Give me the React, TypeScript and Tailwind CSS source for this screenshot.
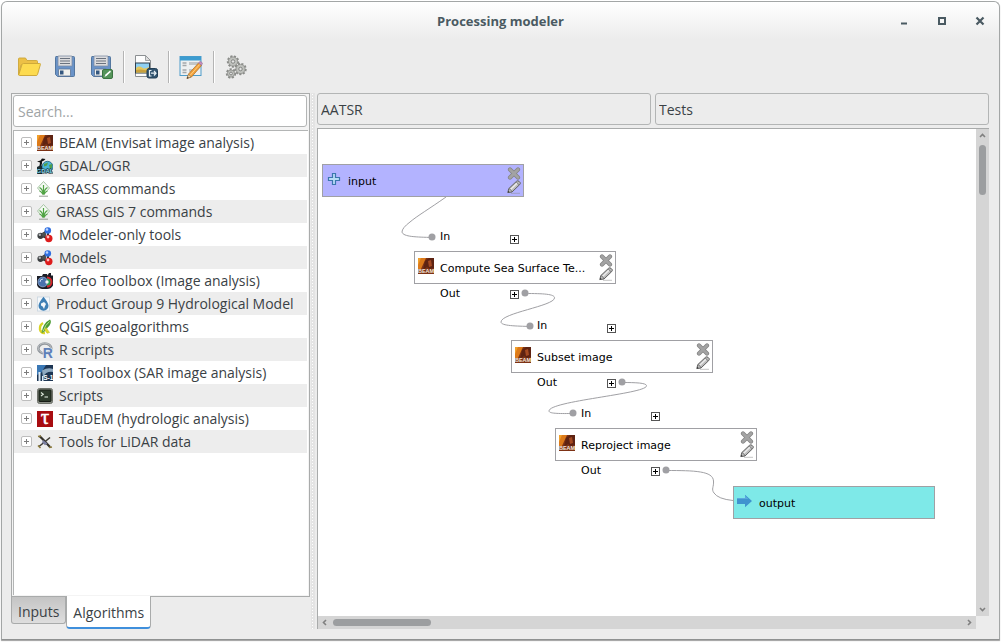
import React from 'react';

/* ---------- toolbar icons ---------- */

function FolderIcon() {
  return (
    <svg width="24" height="24" viewBox="0 0 24 24" aria-hidden="true">
      <path d="M1.500 20V4q0-1 1-1h6l1.500 2.500h9.500q1 0 1 1V10H4z" fill="#ecc046" stroke="#cda638" strokeWidth=".9" />
      <path d="M6.500 8.500h16.200q1 0 .7 1L20.500 19.500q-.3 1-1.300 1H2.500q-1 0-.7-1L5 9.500q.3-1 1.500-1z" fill="#fddb50" stroke="#cfa93a" strokeWidth="1" />
    </svg>
  );
}

function Floppy({ badge = false }: { badge?: boolean }) {
  return (
    <svg width="24" height="24" viewBox="0 0 24 24" aria-hidden="true">
      <path d="M3 1.500h17.500q1 0 1 1v18q0 1-1 1H4.500l-2-2v-17q0-1 .5-1z" fill="#6a93c8" stroke="#54779f" />
      <rect x="5" y="1" width="14" height="10" rx=".5" fill="#dcdcde" stroke="#7f8ea4" strokeWidth=".8" />
      <path d="M7 3.500h10M7 6h10M7 8.500h10" stroke="#6a727e" strokeWidth="1" />
      <rect x="5.500" y="14" width="12" height="7" rx=".5" fill="#f0f0ec" stroke="#5d7594" strokeWidth=".8" />
      <rect x="7" y="15.500" width="3.500" height="4" fill="#34577f" />
      {badge && (
        <g>
          <rect x="13.500" y="14.500" width="10" height="9" rx="1.500" fill="#55945a" stroke="#3c7442" />
          <path d="M15.500 22l1-2.500 4.500-4 1 1.200-4.300 4z" fill="#fff" />
        </g>
      )}
    </svg>
  );
}

function ExportImageIcon() {
  return (
    <svg width="24" height="24" viewBox="0 0 24 24" aria-hidden="true">
      <path d="M1.500.500h10l5 5v16h-15z" fill="#fdfdfd" stroke="#8b8f92" />
      <path d="M11.500.500v5h5z" fill="#ddd" stroke="#8b8f92" strokeWidth=".8" />
      <rect x="1.500" y="8" width="14" height="10" fill="#8fd0f2" stroke="#2f3f4c" />
      <path d="M2 13q3-2.500 6-.5t7-.5v5.500H2z" fill="#e3c75d" />
      <path d="M2 15q5-1.500 13 1v1.500H2z" fill="#c9a03d" />
      <rect x="13" y="13.500" width="10.500" height="9.500" rx="2" fill="#31536f" stroke="#223e55" />
      <path d="M17.500 15.500h-2v5.500h2M17 18.200h5M20 16l2 2.200-2 2.300" fill="none" stroke="#e9f1f6" strokeWidth="1.200" />
    </svg>
  );
}

function EditFormIcon() {
  return (
    <svg width="24" height="24" viewBox="0 0 24 24" aria-hidden="true">
      <rect x="1" y="1.500" width="21" height="19" fill="#eef0f1" stroke="#4e9cc9" />
      <rect x="1" y="1.500" width="21" height="4" fill="#3c9cd0" />
      <path d="M3.500 8h4M3.500 10.500h4M3.500 15h4M3.500 17.500h4" stroke="#a4a7aa" strokeWidth="1.500" />
      <path d="M10 8.500h9M10 15.500h5" stroke="#c3c6c8" strokeWidth="3" />
      <path d="M8 23.500l1.500-4.500L19.500 8l3 2.500L12.500 22z" fill="#f2a03a" stroke="#a86a20" strokeWidth=".7" />
      <path d="M11 20.500L20.800 9.300" stroke="#ffd083" strokeWidth="1" />
      <path d="M19.500 8l1-1.200q1.500-.8 3 1.300L22.500 10.500z" fill="#c58fc0" stroke="#8a6486" strokeWidth=".5" />
      <path d="M8 23.500l1.500-4 2.600 2.300z" fill="#f4dcb4" stroke="#87653a" strokeWidth=".5" />
      <path d="M7.800 23.700l.8-2 1.200 1.100z" fill="#333" />
    </svg>
  );
}

function Gear({ x, y, r }: { x: number; y: number; r: number }) {
  return (
    <g transform={`translate(${x} ${y})`}>
      <circle r={r} fill="none" stroke="#8a8c89" strokeWidth="2.400" strokeDasharray="2 1.400" />
      <circle r={r - 0.4} fill="#bfc1bd" stroke="#8a8c88" strokeWidth=".8" />
      <circle r={r * 0.35} fill="#e4e4e4" stroke="#7d7f7c" strokeWidth=".9" />
    </g>
  );
}

function GearsIcon() {
  return (
    <svg width="24" height="24" viewBox="0 0 24 24" aria-hidden="true">
      <Gear x={9} y={6.500} r={5} />
      <Gear x={16.500} y={14} r={5} />
      <Gear x={7} y={18.500} r={4} />
    </svg>
  );
}

/* ---------- provider icons ---------- */

function BeamIcon() {
  return (
    <svg width="16" height="16" viewBox="0 0 16 16" aria-hidden="true">
      <rect width="16" height="16" fill="#7d3215" />
      <path d="M0 0h8L3 11H0z" fill="#dc7a1a" />
      <path d="M0 0h3L0 7z" fill="#f0a02c" />
      <path d="M7 3l4-3h5v10l-4 1-3-2-4 3z" fill="#5e2312" />
      <path d="M10 3l3-1 1 6-3 1z" fill="#a54a22" />
      <text x="8" y="15.300" textAnchor="middle" fontSize="5.500" fontWeight="700" fontFamily="Liberation Sans, sans-serif" fill="#f2e6df">BEAM</text>
    </svg>
  );
}

function GdalIcon() {
  return (
    <svg width="16" height="16" viewBox="0 0 16 16" aria-hidden="true">
      <circle cx="10.500" cy="8.800" r="5.500" fill="#49b5d6" stroke="#1c5b73" strokeWidth=".8" />
      <path d="M7 6l4-1.500-1 3-3 1zM12 7l3-1v4l-2 1z" fill="#4f9e4c" />
      <path d="M0 3.500l3.500-1L5 .5 8.500 1 7 2.500 5 3.500v2l-1 3-1.500-.5L3 4.500z" fill="#111" />
      <path d="M0 9l3-1.500h2V16H1q-1 0-1-1z" fill="#1b2b30" />
      <text x="8" y="14.800" textAnchor="middle" fontSize="6" fontWeight="700" fontFamily="Liberation Sans, sans-serif" fill="#8fdcec" stroke="#10262d" strokeWidth="1.200" paintOrder="stroke">GDAL</text>
    </svg>
  );
}

function GrassIcon() {
  return (
    <svg width="13" height="16" viewBox="0 0 13 16" aria-hidden="true">
      <path d="M6.500.500l6 6.500-6 7-6-7z" fill="#f4faf3" stroke="#9fbd9d" strokeWidth=".9" />
      <path d="M6.500 13.500V4M6.300 13Q5.500 8 2.500 6.500M6.700 13Q7.500 8 10.500 6.500M6.200 13.500Q4.500 10.500 2.500 10M6.800 13.500q1.500-3 3.700-3.500" fill="none" stroke="#4fa343" strokeWidth="1.200" />
      <path d="M2 15.200h9" stroke="#8b928a" strokeWidth=".9" />
    </svg>
  );
}

function ModelIcon() {
  return (
    <svg width="16" height="16" viewBox="0 0 16 16" aria-hidden="true">
      <path d="M4 8.500L10 3.500M4 8.500l7 3M11 4v7" stroke="#333" strokeWidth="2" />
      <circle cx="3.500" cy="8.800" r="3.100" fill="#3b3e40" />
      <circle cx="7" cy="7.500" r="2.300" fill="#4d5052" />
      <circle cx="10.800" cy="3.500" r="3.300" fill="#2f6fe0" />
      <circle cx="11.800" cy="11.500" r="3.700" fill="#dd1c1c" />
      <circle cx="2.800" cy="7.800" r="1.200" fill="#b6b9bb" />
      <circle cx="10" cy="2.500" r="1.300" fill="#bcd4ff" />
      <circle cx="11" cy="10" r="1.400" fill="#ffc1c1" />
    </svg>
  );
}

function OrfeoIcon() {
  return (
    <svg width="16" height="16" viewBox="0 0 16 16" aria-hidden="true">
      <path d="M0 3h5l1-2h4l.5 1.500L12 0h2v2.500h2v10q-2 3.500-6 3.500H5q-4-.5-5-4z" fill="#1b1d26" />
      <circle cx="5.800" cy="9" r="4.900" fill="#4a72ad" stroke="#9fb6d8" strokeWidth=".7" />
      <path d="M10 3.500a5.500 5.500 0 010 11z" fill="#d6232b" />
      <path d="M10 5.500a3.500 3.500 0 010 7z" fill="#2b9a51" />
      <circle cx="10" cy="9" r="1.700" fill="#f3f3f3" />
      <path d="M3 9a3 3 0 013-3" fill="none" stroke="#cfdcf0" />
    </svg>
  );
}

function DropIcon() {
  return (
    <svg width="13" height="16" viewBox="0 0 13 16" aria-hidden="true">
      <rect x=".5" y="1" width="12" height="14" fill="#f5f8fb" stroke="#c9d5e0" strokeWidth=".8" />
      <path d="M6.500.800Q11.500 7 11.500 9.800a5 5 0 01-10 0Q1.500 7 6.500.800z" fill="#3d7fb5" />
      <path d="M4 7.500l3-1.500 2 2-1 2-1 3-1.300-2.500L4 9.500z" fill="#f2f7fb" />
    </svg>
  );
}

function QgisIcon() {
  return (
    <svg width="16" height="16" viewBox="0 0 16 16" aria-hidden="true">
      <path d="M6 4Q2.500 6 3 10.500 4 14.500 8 14" fill="none" stroke="#d9d325" strokeWidth="2.400" />
      <path d="M4.500 14Q6 4 13 .500q2 2-.5 6L7 13z" fill="#4a9a33" />
      <path d="M6 12.500Q8 6 12.500 2.500" fill="none" stroke="#b4df94" strokeWidth="1" />
      <path d="M9 8.500l3.500 5-2.500.800-2.500-3.500z" fill="#dfdb28" stroke="#bcb52a" strokeWidth=".5" />
    </svg>
  );
}

function RIcon() {
  return (
    <svg className="overflow-visible" width="16" height="16" viewBox="0 0 16 16" aria-hidden="true">
      <ellipse cx="7.800" cy="6.500" rx="6.500" ry="5" fill="none" stroke="#8f949a" strokeWidth="2.600" />
      <ellipse cx="7.600" cy="6" rx="6.500" ry="4.900" fill="none" stroke="#c7cacd" strokeWidth=".8" />
      <text x="5.800" y="15.500" fontSize="14" fontWeight="700" fontFamily="Liberation Sans, sans-serif" fill="#5e7fb8" stroke="#e8edf5" strokeWidth="1.200" paintOrder="stroke">R</text>
    </svg>
  );
}

function S1Icon() {
  return (
    <svg width="16" height="16" viewBox="0 0 16 16" aria-hidden="true">
      <rect width="16" height="16" fill="#1d3553" />
      <path d="M0 0h9L4 8l-4 2z" fill="#3a78b5" />
      <path d="M5 5.500Q11 2 16 4v3Q9 6 6 12z" fill="#8fa9c0" />
      <path d="M1.500 16V7h2v9zM5 11h1.500v5H5z" fill="#dbe7f2" />
      <text x="11.300" y="15.200" textAnchor="middle" fontSize="6.500" fontWeight="700" fontFamily="Liberation Sans, sans-serif" fill="#fff">S-1</text>
    </svg>
  );
}

function TerminalIcon() {
  return (
    <svg width="16" height="16" viewBox="0 0 16 16" aria-hidden="true">
      <rect x=".5" y=".5" width="15" height="15" rx="2" fill="#8b8f86" stroke="#6d7069" />
      <rect x="2" y="2" width="12" height="11.500" rx=".5" fill="#2e3b2c" stroke="#161c15" />
      <path d="M4 4.500l2.300 1.800L4 8" fill="none" stroke="#dfe9dc" strokeWidth="1.100" />
      <path d="M7.500 9h3.500" stroke="#dfe9dc" strokeWidth="1.100" />
    </svg>
  );
}

function TauIcon() {
  return (
    <svg className="overflow-visible" width="16" height="16" viewBox="0 0 16 16" aria-hidden="true">
      <rect width="16" height="16" fill="#a80c10" />
      <text x="8" y="13" textAnchor="middle" fontSize="21" fontFamily="Liberation Serif, serif" fill="#fff" stroke="#fff" strokeWidth=".5">τ</text>
    </svg>
  );
}

function LidarIcon() {
  return (
    <svg width="16" height="16" viewBox="0 0 16 16" aria-hidden="true">
      <path d="M2.500 2l4.500 4.500 6 6.500" stroke="#35322c" strokeWidth="2.200" fill="none" />
      <path d="M2 12.500l5-4 6-5" stroke="#3d3a33" strokeWidth="1.600" fill="none" />
      <path d="M1 2.500l3-.5M12 13.500l3-.5M1 11.500l2.500 2.500" stroke="#8a7838" strokeWidth="1.500" />
      <path d="M6 6l4.500 3.500-2.500 1.800-3-2.800z" fill="#7a7fa0" />
    </svg>
  );
}

/* ---------- model canvas icons ---------- */

function CrossIcon() {
  return (
    <svg width="14" height="13" viewBox="0 0 14 13" aria-hidden="true">
      <path d="M3 2.500l8 8M11 2.500l-8 8" stroke="#838383" strokeWidth="4.200" strokeLinecap="round" />
      <path d="M3 2.500l8 8M11 2.500l-8 8" stroke="#a3a3a3" strokeWidth="2.800" strokeLinecap="round" />
    </svg>
  );
}

function PencilIcon() {
  return (
    <svg width="14" height="14" viewBox="0 0 14 14" aria-hidden="true">
      <path d="M4 13.300h9" stroke="#8a8a8a" strokeOpacity=".5" strokeWidth="1" />
      <path d="M.8 12.600l1-4L9.500 1.300q1.200-1 2.500 0l1 1q.8 1.200-.3 2.300L5 12z" fill="#bdbdbd" stroke="#5f5f5f" strokeWidth="1" />
      <path d="M3.500 9.500l6.500-6.300" stroke="#ececec" strokeWidth="1.400" />
      <path d="M1.800 8.600Q4 9 5 12M9.300 2l3 3" fill="none" stroke="#6b6b6b" strokeWidth=".8" />
      <path d="M.8 12.600l.5-1.800 1.300 1.300z" fill="#333" />
    </svg>
  );
}

function InputPlusIcon() {
  return (
    <svg width="16" height="16" viewBox="0 0 16 16" aria-hidden="true">
      <path d="M6.500 2.500h3v4h4v3h-4v4h-3v-4h-4v-3h4z" fill="#b7dcf5" stroke="#3b76ad" strokeWidth="1.200" />
    </svg>
  );
}

function OutputArrowIcon() {
  return (
    <svg width="16" height="16" viewBox="0 0 16 16" aria-hidden="true">
      <path d="M0 5h8V1.800L15 8l-7 6.200V11H0z" fill="#3f93cf" />
      <path d="M0 5h8V2.500L11.500 6H0z" fill="#5aa9dd" />
    </svg>
  );
}

/* ---------- data ---------- */

const providers = [
  { name: 'BEAM (Envisat image analysis)', Icon: BeamIcon },
  { name: 'GDAL/OGR', Icon: GdalIcon },
  { name: 'GRASS commands', Icon: GrassIcon },
  { name: 'GRASS GIS 7 commands', Icon: GrassIcon },
  { name: 'Modeler-only tools', Icon: ModelIcon },
  { name: 'Models', Icon: ModelIcon },
  { name: 'Orfeo Toolbox (Image analysis)', Icon: OrfeoIcon },
  { name: 'Product Group 9 Hydrological Model', Icon: DropIcon },
  { name: 'QGIS geoalgorithms', Icon: QgisIcon },
  { name: 'R scripts', Icon: RIcon },
  { name: 'S1 Toolbox (SAR image analysis)', Icon: S1Icon },
  { name: 'Scripts', Icon: TerminalIcon },
  { name: 'TauDEM (hydrologic analysis)', Icon: TauIcon },
  { name: 'Tools for LiDAR data', Icon: LidarIcon },
];

/* ---------- building blocks ---------- */

function ToolButton({ label, children }: { label: string; children: React.ReactNode }) {
  return (
    <button aria-label={label} className="flex h-10 w-9 items-center justify-center">
      {children}
    </button>
  );
}

function Separator() {
  return <div className="mr-[3px] ml-1 box-content h-8 w-px border-r border-white bg-[#b4b4b4]" />;
}

function Expander({ label }: { label: string }) {
  return (
    <button aria-label={label} className="flex size-[11px] shrink-0 items-center justify-center rounded-[2px] border border-[#bdbdbd] bg-white">
      <svg width="7" height="7" viewBox="0 0 7 7" aria-hidden="true">
        <path d="M3.500 1v5M1 3.500h5" stroke="#7c7c7c" />
      </svg>
    </button>
  );
}

function FoldButton({ label }: { label: string }) {
  return (
    <button aria-label={label} className="flex size-[9px] items-center justify-center border border-[#555] bg-white">
      <svg width="7" height="7" viewBox="0 0 7 7" aria-hidden="true">
        <path d="M3.500 1v5M1 3.500h5" stroke="#000" />
      </svg>
    </button>
  );
}

function NodeBox({ name, icon, editable = true, color }: { name: string; icon: React.ReactNode; editable?: boolean; color: string }) {
  return (
    <div className={`flex h-[33px] w-[202px] items-center border border-[#a0a0a4] pr-[2px] pl-[3px] ${color}`}>
      <span className="mr-1.5 w-4 pb-[3px]">{icon}</span>
      <span className="flex-1 whitespace-nowrap pt-0.5">{name}</span>
      {editable && (
        <span className="flex flex-col">
          <button aria-label={`Delete ${name}`}><CrossIcon /></button>
          <button aria-label={`Edit ${name}`}><PencilIcon /></button>
        </span>
      )}
    </div>
  );
}

function AlgorithmNode({ name, place }: { name: string; place: string }) {
  return (
    <div className={`absolute w-[202px] ${place}`}>
      <div className="mb-1.5 flex h-4 items-center pl-[26px]">
        <span className="w-[70px]">In</span>
        <span className="pt-1"><FoldButton label="Show inputs" /></span>
      </div>
      <NodeBox name={name} icon={<BeamIcon />} color="bg-white" />
      <div className="mt-0.5 flex h-4 items-center pl-[26px]">
        <span className="w-[70px]">Out</span>
        <FoldButton label="Show outputs" />
      </div>
    </div>
  );
}

function Links() {
  const dots = [
    [114, 108],
    [207, 164],
    [212, 197],
    [304, 253],
    [255, 284],
    [348, 341],
  ];
  return (
    <svg className="absolute left-0 top-0" width="660" height="480" aria-hidden="true">
      <g fill="none" stroke="#a0a0a4" strokeWidth="1">
        <path d="M128 68C111 80 99 87 92 93Q84 99 84 103C85 108 99 108 114 108.500" />
        <path d="M207 164.500C225 164.500 237 165 236.500 169C236 177 183 184 183 193C183 197 199 197 212 197.500" />
        <path d="M304 253.500C319 253.500 329 254 328.500 257C327 265 231 272 231 282C231 285 244 284.500 255 284.500" />
        <path d="M348 341.500C377 341.500 395 342 395.500 352C396 358 393 360 396 364Q400 370 415 371.500" />
      </g>
      {dots.map(([x, y]) => (
        <circle key={`${x}-${y}`} cx={x} cy={y} r="3.500" fill="#a0a0a4" />
      ))}
    </svg>
  );
}

function Chevron({ d }: { d: string }) {
  return (
    <svg width="7" height="7" viewBox="0 0 7 7" aria-hidden="true">
      <path d={d} fill="none" stroke="#808080" strokeWidth="1.600" />
    </svg>
  );
}

export default function App() {
  return (
    <div className="flex h-screen flex-col bg-white px-px pt-px pb-0.5 font-['Open_Sans','Noto_Sans',sans-serif] text-[14px] leading-5 text-[#3a4145]">
      <div className="flex min-h-0 flex-1 flex-col rounded-t-md border border-[#a3a6a6] border-b-[#8f9191] bg-[linear-gradient(#ffffff,#ececec_38px)] shadow-[0_1px_1px_#a0a0a0]">
        {/* title bar */}
        <header className="grid h-[38px] shrink-0 grid-cols-[1fr_auto_1fr] items-center">
          <h1 className="col-start-2 text-[13px] font-bold text-[#4a5a62]">Processing modeler</h1>
          <div className="flex items-center justify-end gap-[18px] pr-[9px]">
            <button aria-label="Minimize" className="flex size-5 items-center justify-center">
              <svg width="10" height="10" viewBox="0 0 10 10"><path d="M2 7.500h6" stroke="#4a5a62" strokeWidth="2" /></svg>
            </button>
            <button aria-label="Maximize" className="flex size-5 items-center justify-center">
              <svg width="10" height="10" viewBox="0 0 10 10"><rect x="2" y="2" width="6" height="6" fill="none" stroke="#4a5a62" strokeWidth="2" /></svg>
            </button>
            <button aria-label="Close" className="flex size-5 items-center justify-center">
              <svg width="10" height="10" viewBox="0 0 10 10"><path d="M1.500 1.500l7 7M8.500 1.500l-7 7" stroke="#4a5a62" strokeWidth="2.200" /></svg>
            </button>
          </div>
        </header>

        {/* toolbar */}
        <div role="toolbar" className="flex shrink-0 items-center px-[9px] pt-[7px] pb-1.5">
          <ToolButton label="Open model"><FolderIcon /></ToolButton>
          <ToolButton label="Save"><Floppy /></ToolButton>
          <ToolButton label="Save as"><Floppy badge /></ToolButton>
          <Separator />
          <ToolButton label="Export as image"><ExportImageIcon /></ToolButton>
          <Separator />
          <ToolButton label="Edit model help"><EditFormIcon /></ToolButton>
          <Separator />
          <ToolButton label="Run model"><GearsIcon /></ToolButton>
        </div>

        <main className="flex min-h-0 flex-1 pr-2.5 pb-2.5 pl-[9px]">
          {/* algorithm browser */}
          <section className="flex w-[299px] shrink-0 flex-col">
            <div className="flex min-h-0 flex-1 flex-col border border-[#a9abab] bg-[#f4f4f4] p-px">
              <input
                type="text"
                aria-label="Search"
                placeholder="Search..."
                className="mr-px h-8 shrink-0 rounded-[3px] border border-[#b3b5b5] bg-white px-1 pt-px outline-none placeholder:text-[#a0a4a5]"
              />
              <ul role="tree" className="mt-[3px] min-h-0 flex-1 overflow-hidden border-t border-l border-[#b3b5b5] bg-white pr-px">
                {providers.map(({ name, Icon }) => (
                  <li key={name} role="treeitem" className="flex h-[23px] items-center pl-[7px] even:bg-[#ededed]">
                    <Expander label={`Expand ${name}`} />
                    <span className="mr-1.5 ml-[5px]"><Icon /></span>
                    <span className="whitespace-nowrap">{name}</span>
                  </li>
                ))}
              </ul>
            </div>
            <div role="tablist" className="flex h-8 items-start">
              <button role="tab" aria-selected="false" className="h-[27px] rounded-b-[3px] border border-t-0 border-[#a9abab] bg-[linear-gradient(#c4c4c4,#dedede)] px-1.5 pt-1">
                Inputs
              </button>
              <button role="tab" aria-selected="true" className="-mt-px h-[33px] rounded-b-[4px] border border-t-0 border-b-2 border-[#a9abab] border-b-[#3f8fdc] bg-white px-1.5 pt-0.5">
                Algorithms
              </button>
            </div>
          </section>

          <div className="mr-0.5 ml-px w-1 bg-[radial-gradient(#fff_1px,#e4e4e4_1px)] bg-size-[3px_3px]" />

          {/* model editor */}
          <section className="flex min-w-0 flex-1 flex-col">
            <div className="flex shrink-0 gap-1">
              <input aria-label="Model name" defaultValue="AATSR" className="h-8 min-w-0 flex-1 rounded-[3px] border border-[#b3b5b5] bg-[#ececec] px-[3px] pt-px outline-none" />
              <input aria-label="Group name" defaultValue="Tests" className="h-8 min-w-0 flex-1 rounded-[3px] border border-[#b3b5b5] bg-[#ececec] px-[3px] pt-px outline-none" />
            </div>
            <div className="mt-[3px] grid min-h-0 flex-1 grid-cols-[1fr_13px] grid-rows-[1fr_13px] border-t border-l border-[#a9abab]">
              <div className="relative overflow-hidden bg-white font-['DejaVu_Sans',sans-serif] text-[11px] leading-4 text-black">
                <Links />
                <div className="absolute left-1 top-[35px]">
                  <NodeBox name="input" icon={<InputPlusIcon />} color="bg-[#b3b3ff]" />
                </div>
                <AlgorithmNode name="Compute Sea Surface Te..." place="left-[96px] top-[100px]" />
                <AlgorithmNode name="Subset image" place="left-[193px] top-[189px]" />
                <AlgorithmNode name="Reproject image" place="left-[237px] top-[277px]" />
                <div className="absolute left-[415px] top-[357px]">
                  <NodeBox name="output" icon={<OutputArrowIcon />} editable={false} color="bg-[#7ee9e8]" />
                </div>
              </div>
              <div className="flex flex-col items-center justify-between bg-[#d5d5d5] py-[3px]">
                <Chevron d="M1 5l2.500-2.500L6 5" />
                <div className="mt-1.5 h-[50px] w-[7px] rounded-full bg-[#9c9ea0]" />
                <div className="flex-1" />
                <Chevron d="M1 2l2.500 2.500L6 2" />
              </div>
              <div className="flex items-center bg-[#d5d5d5] px-[3px]">
                <Chevron d="M5 1L2.500 3.500 5 6" />
                <div className="ml-[5px] h-[7px] w-[98px] rounded-full bg-[#9c9ea0]" />
                <div className="flex-1" />
                <Chevron d="M2 1l2.500 2.500L2 6" />
              </div>
              <div className="bg-[#ececec]" />
            </div>
          </section>
        </main>
      </div>
    </div>
  );
}
